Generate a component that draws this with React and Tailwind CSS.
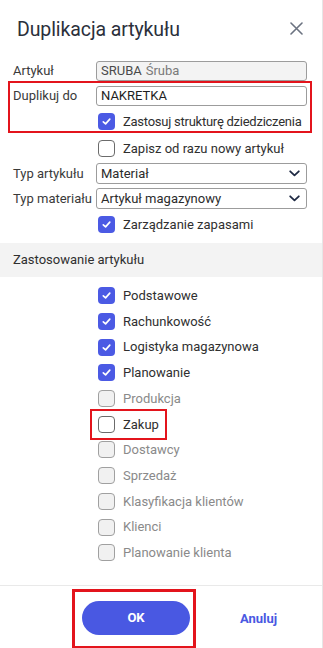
import React from "react";

const Check = ({ state }) => {
  if (state === "on")
    return (
      <span className="w-[17px] h-[17px] rounded-[4px] bg-[#4b5ae4] flex items-center justify-center shrink-0">
        <svg width="11" height="11" viewBox="0 0 12 12" fill="none">
          <path d="M2.5 6.3 L5 8.6 L9.6 3.4" stroke="white" strokeWidth="1.8" strokeLinecap="round" strokeLinejoin="round" />
        </svg>
      </span>
    );
  if (state === "off")
    return <span className="w-[17px] h-[17px] rounded-[4px] bg-white border-[1.5px] border-[#6b6b6b] shrink-0" />;
  return <span className="w-[17px] h-[17px] rounded-[4px] bg-[#f1f1f1] border-[1.5px] border-[#a0a0a0] shrink-0" />;
};

const Chevron = () => (
  <svg width="11" height="7" viewBox="0 0 11 7" fill="none" className="mr-[6px]">
    <path d="M1.2 1.3 L5.5 5.4 L9.8 1.3" stroke="#1f2a44" strokeWidth="1.8" strokeLinecap="round" strokeLinejoin="round" />
  </svg>
);

const Row = ({ label, children }) => (
  <div className="flex items-center">
    <div className="w-[83px] shrink-0 text-[13px] text-[#3a3a3a] whitespace-nowrap">{label}</div>
    <div className="flex-1">{children}</div>
  </div>
);

const Input = ({ children, disabled }) => (
  <div
    className={`h-[20px] border border-[#9c9c9c] rounded-[3px] flex items-center px-[4px] text-[13px] ${
      disabled ? "bg-[#f3f3f3]" : "bg-white"
    }`}
  >
    {children}
  </div>
);

const Select = ({ value }) => (
  <div className="h-[21px] border border-[#9c9c9c] rounded-[3px] flex items-center justify-between pl-[4px] text-[13px] text-[#2b2b2b] bg-white">
    <span>{value}</span>
    <Chevron />
  </div>
);

const CheckRow = ({ state, label, className = "" }) => (
  <div className={`flex items-center gap-[8px] pl-[85px] ${className}`}>
    <Check state={state} />
    <span className={`text-[13px] whitespace-nowrap ${state === "dis" ? "text-[#8a8a8a]" : "text-[#2f2f2f]"}`}>{label}</span>
  </div>
);

const list = [
  ["on", "Podstawowe"],
  ["on", "Rachunkowość"],
  ["on", "Logistyka magazynowa"],
  ["on", "Planowanie"],
  ["dis", "Produkcja"],
  ["off", "Zakup"],
  ["dis", "Dostawcy"],
  ["dis", "Sprzedaż"],
  ["dis", "Klasyfikacja klientów"],
  ["dis", "Klienci"],
  ["dis", "Planowanie klienta"],
];

export default function App() {
  return (
    <div
      className="w-[323px] h-[648px] bg-white border-r border-[#e6e6e6] flex flex-col overflow-hidden"
      style={{ fontFamily: "Roboto, 'Liberation Sans', sans-serif" }}
    >
      <div className="flex items-center justify-between pl-[17px] pr-[19px] pt-[17px] h-[43px]">
        <span className="text-[19.5px] leading-[26px] text-[#2b303b] tracking-[-0.1px]">Duplikacja artykułu</span>
        <svg width="13" height="13" viewBox="0 0 13 13" className="mt-[-4px]">
          <path d="M1 1 L12 12 M12 1 L1 12" stroke="#6b7280" strokeWidth="1.6" strokeLinecap="round" />
        </svg>
      </div>

      <div className="px-[10px] pl-[8px] pt-[18px] flex flex-col">
        <div className="px-[5px]">
          <Row label="Artykuł">
            <Input disabled>
              <span className="text-[#4a4a4a]">SRUBA</span>
              <span className="text-[#7a7a7a] ml-[4px]">Śruba</span>
            </Input>
          </Row>
        </div>
        <div className="border-2 border-[#e3141c] px-[3px] pt-[3px] pb-[1px] flex flex-col gap-[7px]">
          <Row label="Duplikuj do">
            <Input>
              <span className="text-[#1f1f1f]">NAKRETKA</span>
            </Input>
          </Row>
          <div className="flex items-center gap-[8px] pl-[85px] h-[17px]">
            <Check state="on" />
            <span className="text-[13px] text-[#2f2f2f] whitespace-nowrap tracking-[-0.25px]">Zastosuj strukturę dziedziczenia</span>
          </div>
        </div>
        <div className="px-[5px] flex flex-col">
          <CheckRow state="off" label="Zapisz od razu nowy artykuł" className="mt-[7px] h-[17px]" />
          <div className="mt-[6px]">
            <Row label="Typ artykułu">
              <Select value="Materiał" />
            </Row>
          </div>
          <div className="mt-[4px]">
            <Row label="Typ materiału">
              <Select value="Artykuł magazynowy" />
            </Row>
          </div>
          <CheckRow state="on" label="Zarządzanie zapasami" className="mt-[7px] h-[17px]" />
        </div>
      </div>

      <div className="mt-[10px] h-[34px] bg-[#f3f3f3] flex items-center pl-[13px] text-[13px] text-[#2f2f2f]">
        Zastosowanie artykułu
      </div>

      <div className="pt-[6px] pl-[13px] flex flex-col flex-1">
        {list.map(([s, l]) =>
          l === "Zakup" ? (
            <div key={l} className="h-[25.7px] flex items-center pl-[85px]">
              <div className="relative flex items-center gap-[8px]">
                <div className="absolute left-[-8px] right-[-8px] top-[-5.5px] bottom-[-5.5px] border-[2.5px] border-[#e3141c]" />
                <Check state={s} />
                <span className="text-[13px] text-[#2f2f2f]">{l}</span>
              </div>
            </div>
          ) : (
            <CheckRow key={l} state={s} label={l} className="h-[25.7px]" />
          )
        )}
      </div>

      <div className="h-[63px] border-t border-[#e9e9e9] flex items-start pt-[15px] pl-[82px]">
        <div className="relative">
          <div className="absolute left-[-10px] right-[-6px] top-[-12px] bottom-[-14px] border-[3px] border-[#e3141c]" />
          <button className="w-[108px] h-[34px] rounded-full bg-[#4958e2] text-white text-[13px] font-bold">OK</button>
        </div>
        <span className="ml-[50px] mt-[8px] text-[13px] font-bold text-[#4958e2]">Anuluj</span>
      </div>
    </div>
  );
}
